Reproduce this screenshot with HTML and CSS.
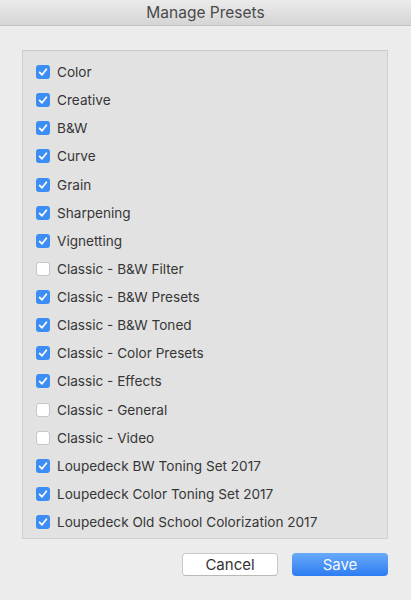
FILE: index.html
```html
<!DOCTYPE html>
<html lang="en">

<head>
    <meta charset="UTF-8">
    <meta name="viewport" content="width=device-width, initial-scale=1.0">
    <title>Manage Presets</title>
    <link rel="stylesheet" href="styles.css">
</head>

<body>
    <div class="window">
        <header class="title-bar">Manage Presets</header>

        <section class="preset-list">
            <label class="preset"><span class="check on"></span>Color</label>
            <label class="preset"><span class="check on"></span>Creative</label>
            <label class="preset"><span class="check on"></span>B&amp;W</label>
            <label class="preset"><span class="check on"></span>Curve</label>
            <label class="preset"><span class="check on"></span>Grain</label>
            <label class="preset"><span class="check on"></span>Sharpening</label>
            <label class="preset"><span class="check on"></span>Vignetting</label>
            <label class="preset"><span class="check"></span>Classic - B&amp;W Filter</label>
            <label class="preset"><span class="check on"></span>Classic - B&amp;W Presets</label>
            <label class="preset"><span class="check on"></span>Classic - B&amp;W Toned</label>
            <label class="preset"><span class="check on"></span>Classic - Color Presets</label>
            <label class="preset"><span class="check on"></span>Classic - Effects</label>
            <label class="preset"><span class="check"></span>Classic - General</label>
            <label class="preset"><span class="check"></span>Classic - Video</label>
            <label class="preset"><span class="check on"></span>Loupedeck BW Toning Set 2017</label>
            <label class="preset"><span class="check on"></span>Loupedeck Color Toning Set 2017</label>
            <label class="preset"><span class="check on"></span>Loupedeck Old School Colorization 2017</label>
        </section>

        <div class="actions">
            <button class="btn cancel" type="button">Cancel</button>
            <button class="btn save" type="button">Save</button>
        </div>
    </div>

    <script>
        // toggle a preset on click
        document.querySelectorAll('.preset').forEach(function (row) {
            row.addEventListener('click', function () {
                row.querySelector('.check').classList.toggle('on');
            });
        });
    </script>
</body>

</html>
```

FILE: styles.css
```css
body {
    margin: 0;
    background-color: #ececec;
    font-family: Inter, "Liberation Sans", sans-serif;
    color: #333;
}

.window {
    width: 411px;
    height: 600px;
    display: flex;
    flex-direction: column;
}

.title-bar {
    height: 25px;
    line-height: 26px;
    text-align: center;
    font-size: 15.5px;
    color: #4a4a4a;
    background: linear-gradient(#ebebeb, #d5d5d5);
    border-bottom: 1px solid #c4c4c4;
}

.preset-list {
    margin: 24px 23px 0 22px;
    padding: 7px 0 2px 13px;
    background-color: #e2e2e2;
    border: 1px solid #cfcfcf;
    border-top-color: #c9c9c9;
}

.preset {
    display: flex;
    align-items: center;
    height: 28.125px;
    font-size: 13.6px;
    color: #363636;
    cursor: default;
}

.check {
    width: 14px;
    height: 14px;
    box-sizing: border-box;
    margin-right: 7px;
    border-radius: 3px;
    background-color: #fff;
    border: 1px solid #c6c6c6;
}

.check.on {
    border: none;
    background: #3d8ef4 url("data:image/svg+xml,%3Csvg xmlns='http://www.w3.org/2000/svg' viewBox='0 0 14 14'%3E%3Cpath d='M3.6 7.4 6 9.8 10.4 4.2' fill='none' stroke='%23fff' stroke-width='1.7' stroke-linecap='round' stroke-linejoin='round'/%3E%3C/svg%3E") no-repeat center / 14px 14px;
}

.actions {
    display: flex;
    justify-content: flex-end;
    gap: 14px;
    margin: 14px 23px 0 0;
}

.btn {
    width: 96px;
    height: 23px;
    padding: 0;
    border-radius: 4px;
    font-family: Inter, "Liberation Sans", sans-serif;
    font-size: 15px;
}

.cancel {
    background-color: #fff;
    color: #333;
    border: 1px solid #cacaca;
    border-bottom-color: #b8b8b8;
}

.save {
    color: #f4f8ff;
    border: none;
    background: linear-gradient(#6aaaf9, #2c7cf2);
}
```
